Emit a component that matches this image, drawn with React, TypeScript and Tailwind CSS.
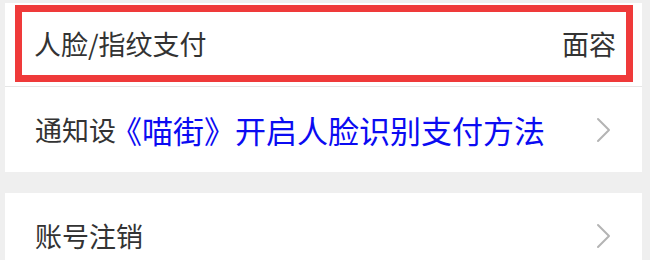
import React from 'react';

function Chevron() {
  return (
    <svg width="16" height="26" viewBox="0 0 16 26" fill="none" className="shrink-0">
      <polyline points="3,2 14,13 3,24" stroke="#b4b4b4" strokeWidth="2" strokeLinecap="round" strokeLinejoin="round" />
    </svg>
  );
}

export default function App() {
  return (
    <div
      className="h-[260px] w-[650px] overflow-hidden bg-[#efefef] pl-[5px] pr-[8px] pt-[3px] text-[#333333]"
      style={{ fontFamily: '"Noto Sans CJK SC", "Noto Sans", sans-serif' }}
    >
      {/* Face / fingerprint payment row, highlighted */}
      <div className="bg-white pl-[10px] pr-[9px] pt-[2px] pb-[4px] border-b border-[#e6e6e6]">
        <div className="flex h-[77px] items-center justify-between border-[7px] border-[#ef3a3a] pl-[12px] pr-[10px]">
          <span className="text-[27px] leading-none">人脸/指纹支付</span>
          <span className="text-[27px] leading-none">面容</span>
        </div>
      </div>

      {/* Notification settings row, caption runs over its label */}
      <div className="flex h-[85px] items-center justify-between bg-white pl-[30px] pr-[31px]">
        <div className="flex items-center">
          <span className="text-[27px] leading-none">通知设</span>
          <span className="-ml-[5px] text-[31px] leading-none text-[#0b0bf2]">《喵街》开启人脸识别支付方法</span>
        </div>
        <Chevron />
      </div>

      <div className="h-[21px]" />

      {/* Account cancellation row */}
      <div className="flex h-[85px] items-center justify-between bg-white pl-[30px] pr-[31px]">
        <span className="text-[27px] leading-none">账号注销</span>
        <Chevron />
      </div>
    </div>
  );
}
